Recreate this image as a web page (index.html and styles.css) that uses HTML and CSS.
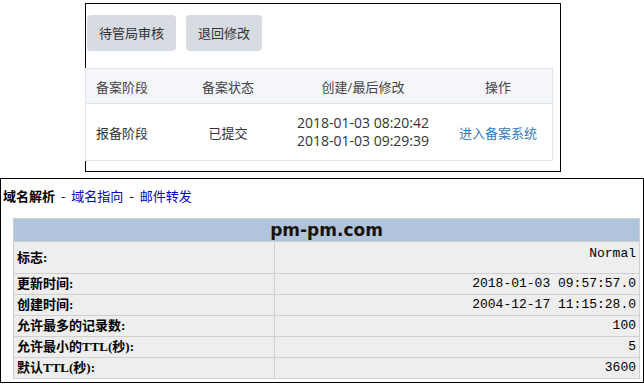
FILE: index.html
```html
<!DOCTYPE html>
<html lang="zh-CN">
	<head>
		<meta charset="utf-8">
		<title>备案 / 域名解析</title>
		<link rel="stylesheet" href="styles.css">
	</head>
	<body>

	<!-- 备案信息 -->
	<div class="beian">
		<div class="btns">
			<span class="btn">待管局审核</span>
			<span class="btn">退回修改</span>
		</div>
		<table class="btable">
			<tr class="bhead">
				<th class="c1">备案阶段</th>
				<th class="c2">备案状态</th>
				<th class="c3">创建/最后修改</th>
				<th class="c4">操作</th>
			</tr>
			<tr class="brow">
				<td class="c1">报备阶段</td>
				<td class="c2">已提交</td>
				<td class="c3 dates">2018-01-03 08:20:42<br>2018-01-03 09:29:39</td>
				<td class="c4"><a class="blink" href="#">进入备案系统</a></td>
			</tr>
		</table>
	</div>

	<!-- 域名解析 -->
	<div class="dns">
		<div class="nav">
			<b>域名解析</b> - <a href="#">域名指向</a> - <a href="#">邮件转发</a>
		</div>
		<table class="dtable">
			<tr><th colspan="2" class="domain">pm-pm.com</th></tr>
			<tr class="tall"><td class="lbl">标志:</td><td class="val top">Normal</td></tr>
			<tr><td class="lbl">更新时间:</td><td class="val">2018-01-03 09:57:57.0</td></tr>
			<tr><td class="lbl">创建时间:</td><td class="val">2004-12-17 11:15:28.0</td></tr>
			<tr><td class="lbl">允许最多的记录数:</td><td class="val">100</td></tr>
			<tr><td class="lbl">允许最小的TTL(秒):</td><td class="val">5</td></tr>
			<tr><td class="lbl">默认TTL(秒):</td><td class="val">3600</td></tr>
		</table>
	</div>

	</body>
</html>
```

FILE: styles.css
```css
		body{
			margin: 0;
			background: #fff;
		}
		.beian{
			margin: 3px 0 0 85px;
			width: 474px;
			border: 1px solid #000;
			padding-bottom: 10px;
			font-family: "Open Sans", "Noto Sans CJK SC", sans-serif;
			font-size: 13px;
			color: #333;
		}
		.btns{
			display: flex;
			gap: 10px;
			padding: 11px 0 0 1px;
		}
		.btn{
			height: 36px;
			line-height: 36px;
			padding: 0 12px;
			background: #d7dbe2;
			border-radius: 4px;
			color: #333;
		}
		.btable{
			margin: 17px 0 0 -1px;
			width: 466px;
			border-collapse: collapse;
			border: 1px solid #dde5ef;
			table-layout: fixed;
		}
		.bhead{
			height: 35px;
			background: #f4f6fa;
			border-bottom: 1px solid #dde5ef;
		}
		.bhead th{
			font-weight: normal;
			color: #444;
		}
		.brow{
			height: 57px;
		}
		.btable th, .btable td{
			padding: 0;
			text-align: center;
		}
		.btable .c1{ width: 78px; text-align: left; padding-left: 10px; }
		.btable .c2{ width: 108px; }
		.btable .c3{ width: 162px; }
		.btable .c4{ width: 108px; }
		.dates{
			font-size: 14px;
			line-height: 18px;
		}
		.blink{
			color: #337ab7;
			text-decoration: none;
		}
		.dns{
			margin-top: 6px;
			width: 642px;
			height: 203px;
			border: 1px solid #000;
			font-family: "Noto Sans CJK SC", sans-serif;
			font-size: 13px;
		}
		.nav{
			padding: 8px 0 0 2px;
			line-height: 18px;
			word-spacing: 3px;
			color: #000;
		}
		.nav a{
			color: #0000cc;
			text-decoration: none;
			word-spacing: 0;
		}
		.dtable{
			margin: 13px 0 0 12px;
			width: 627px;
			border-collapse: collapse;
			border: 1px solid #d0d0d0;
		}
		.dtable td{
			background: #eeeeee;
			border: 1px solid #d0d0d0;
			height: 20px;
			padding: 0 3px;
			line-height: 16px;
		}
		.domain{
			background: #b0c4de;
			height: 22px;
			padding: 0;
			line-height: 20px;
			font-family: "DejaVu Sans", sans-serif;
			font-size: 17px;
			font-weight: bold;
			color: #1a1208;
			text-align: center;
		}
		.dtable .tall td{
			height: 31px;
		}
		.lbl{
			width: 254px;
			font-family: "Liberation Serif", "Noto Sans CJK SC", serif;
			font-weight: bold;
			color: #000;
		}
		.val{
			text-align: right;
			font-family: "Liberation Mono", monospace;
			font-size: 13px;
			color: #000;
		}
		.dtable .val.top{
			vertical-align: top;
			padding-top: 4px;
			height: 27px;
		}
```
